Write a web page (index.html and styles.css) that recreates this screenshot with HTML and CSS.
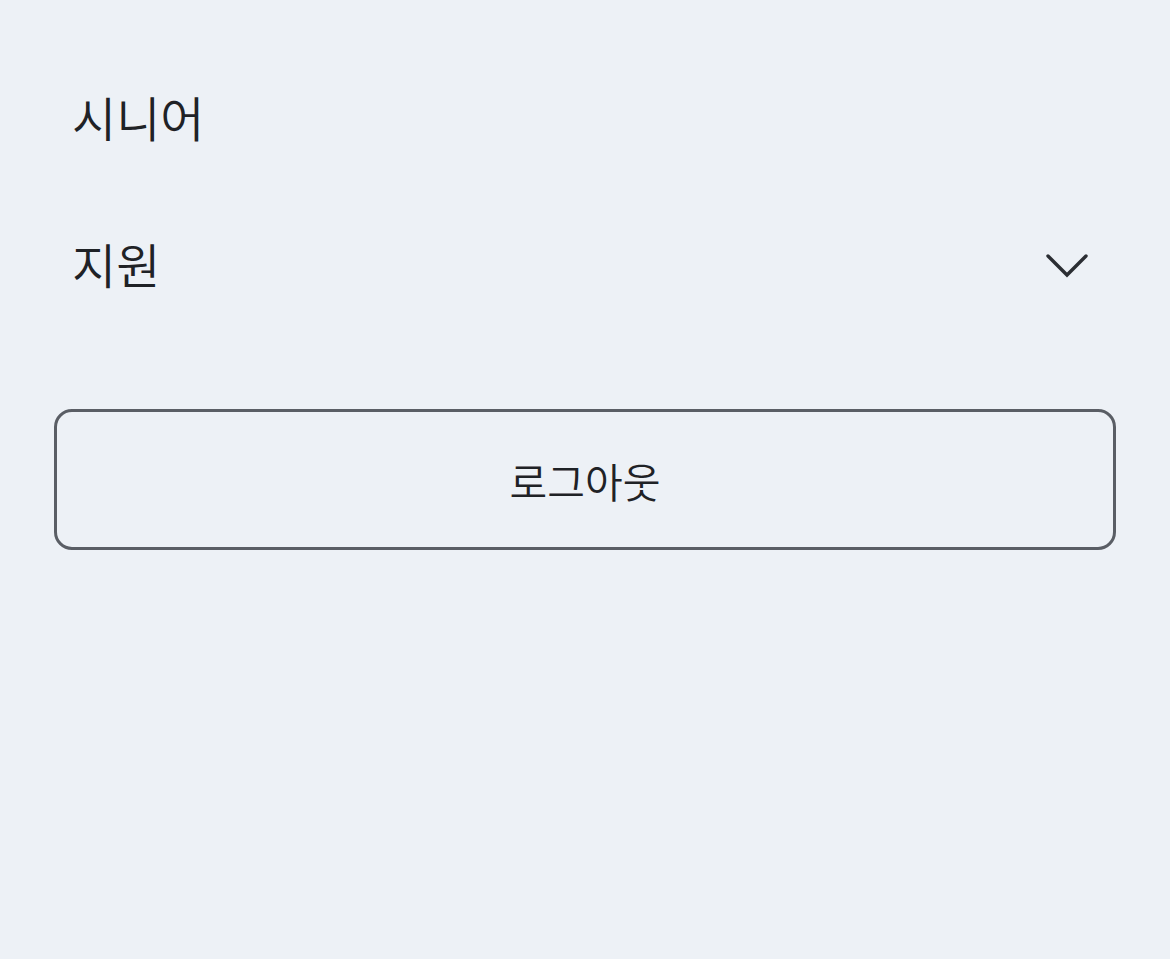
FILE: index.html
```html
<!DOCTYPE html>
<html lang="ko">
<head>
  <meta charset="UTF-8">
  <meta name="viewport" content="width=device-width, initial-scale=1.0">
  <title>메뉴</title>
  <link rel="stylesheet" href="styles.css">
</head>
<body>
  <nav class="side-menu">
    <ul class="menu-list">
      <li class="menu-item">
        <a href="#" class="menu-link">시니어</a>
      </li>
      <li class="menu-item">
        <a href="#" class="menu-link">지원</a>
        <svg class="chevron" width="44" height="26" viewBox="0 0 44 26" fill="none">
          <path d="M3 3 L22 22 L41 3" stroke="#2b2e33" stroke-width="3.4" stroke-linecap="round" stroke-linejoin="miter"/>
        </svg>
      </li>
    </ul>

    <button class="logout-btn" type="button">로그아웃</button>
  </nav>
</body>
</html>
```

FILE: styles.css
```css
body {
  margin: 0;
  padding: 0;
  background-color: #edf1f6;
  color: #1f2226;
  font-family: Roboto, "Noto Sans CJK KR", sans-serif;
}

.side-menu {
  padding: 42px 54px 0 54px;
}

.menu-list {
  list-style: none;
  margin: 0;
  padding: 0;
}

.menu-item {
  display: flex;
  justify-content: space-between;
  align-items: center;
  height: 147px;
  padding: 0 27px 0 18px;
}

.menu-link {
  text-decoration: none;
  color: #1f2226;
  font-size: 48px;
  font-weight: 350;
}

.chevron {
  display: block;
  margin-top: 6px;
}

.logout-btn {
  display: block;
  width: 100%;
  height: 141px;
  margin-top: 73px;
  background: transparent;
  border: 3px solid #5a5e65;
  border-radius: 18px;
  color: #1f2226;
  font-family: Roboto, "Noto Sans CJK KR", sans-serif;
  font-size: 41px;
  font-weight: 350;
  cursor: pointer;
}
```
